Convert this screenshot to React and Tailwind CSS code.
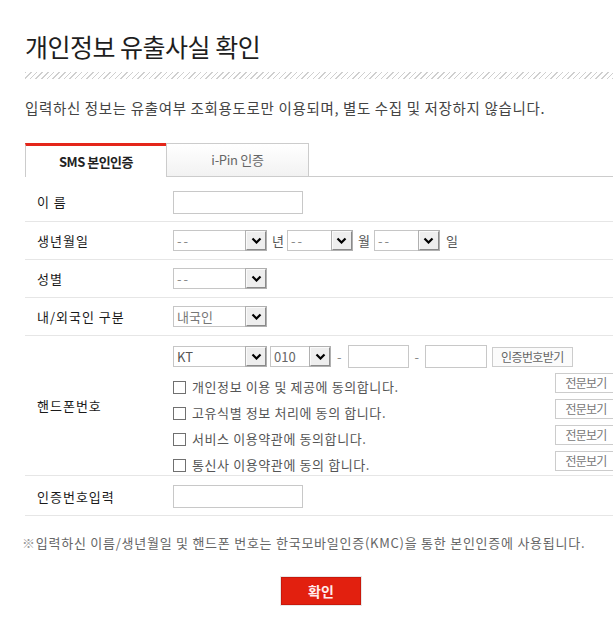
import React from 'react';

const Chevron = () => (
    <svg width="11" height="7" viewBox="0 0 11 7" fill="none">
        <path d="M1.5 1.5 L5.5 5.5 L9.5 1.5" stroke="#000" strokeWidth="2.2" />
    </svg>
);

// windows-style combo box
const Select = ({ className, text, textClass = 'text-[#888] tracking-[2px]' }) => (
    <div className={`flex h-[21px] items-stretch border border-[#c6c6c6] bg-white ${className}`}>
        <span className={`flex-1 overflow-hidden whitespace-nowrap pl-[3px] text-[13px] leading-[19px] ${textClass}`}>
            {text}
        </span>
        <span className="flex w-[20px] items-center justify-center border border-t-[#fafafa] border-l-[#fafafa] border-r-[#8a8a8a] border-b-[#8a8a8a] bg-[#eeeeee] outline outline-1 outline-[#b0b0b0]">
            <Chevron />
        </span>
    </div>
);

const Input = ({ className }) => (
    <div className={`h-[23px] border border-[#c8c8c8] bg-white ${className}`} />
);

const agreements = [
    '개인정보 이용 및 제공에 동의합니다.',
    '고유식별 정보 처리에 동의 합니다.',
    '서비스 이용약관에 동의합니다.',
    '통신사 이용약관에 동의 합니다.',
];

const Label = ({ children }) => (
    <div className="w-[148px] shrink-0 pl-[12px] text-[13px] leading-[18px] tracking-[1px] text-[#1a1a1a]">
        {children}
    </div>
);

const App = () => {
    return (
        <div className="h-[631px] w-[613px] overflow-hidden bg-white pl-[25px] font-['Noto_Sans_CJK_KR','Noto_Sans',sans-serif]">
            <div className="w-[592px]">
                {/* Title */}
                <h1 className="pt-[30px] text-[25px] leading-[32px] tracking-[-0.5px] text-[#1e1e1e]">
                    개인정보 유출사실 확인
                </h1>
                <div className="mt-[10px] h-[7px] bg-[repeating-linear-gradient(135deg,#cfcfcf_0px,#cfcfcf_1px,#ffffff_1px,#ffffff_4px)]" />
                <p className="mt-[19px] text-[14.5px] leading-[20px] tracking-[0.65px] text-[#444]">
                    입력하신 정보는 유출여부 조회용도로만 이용되며, 별도 수집 및 저장하지 않습니다.
                </p>

                {/* Tabs */}
                <div className="mt-[25px] flex h-[34px]">
                    <div className="flex w-[141px] items-center justify-center border-l border-t-[3px] border-l-[#cccccc] border-t-[#e4261a] bg-white text-[13px] font-bold tracking-[-0.5px] text-[#222]">
                        SMS 본인인증
                    </div>
                    <div className="flex w-[143px] items-center justify-center border border-[#cccccc] bg-gradient-to-b from-[#ffffff] to-[#f2f2f2] text-[13px] tracking-[-0.3px] text-[#666]">
                        i-Pin 인증
                    </div>
                    <div className="flex-1 border-b border-[#cccccc]" />
                </div>

                {/* Form */}
                <div className="text-[13px]">
                    <div className="flex h-[45px] items-center border-b border-[#e6e6e6] pt-[6px]">
                        <Label>이 름</Label>
                        <Input className="w-[130px]" />
                    </div>

                    <div className="flex h-[38px] items-center border-b border-[#e6e6e6]">
                        <Label>생년월일</Label>
                        <div className="flex items-center text-[#555]">
                            <Select className="w-[94px]" text="--" />
                            <span className="ml-[5px] mr-[3px]">년</span>
                            <Select className="w-[66px]" text="--" />
                            <span className="ml-[5px] mr-[4px]">월</span>
                            <Select className="w-[66px]" text="--" />
                            <span className="ml-[6px]">일</span>
                        </div>
                    </div>

                    <div className="flex h-[38px] items-center border-b border-[#e6e6e6]">
                        <Label>성별</Label>
                        <Select className="w-[94px]" text="--" />
                    </div>

                    <div className="flex h-[38px] items-center border-b border-[#e6e6e6]">
                        <Label>내/외국인 구분</Label>
                        <Select className="w-[94px]" text="내국인" textClass="text-[#777]" />
                    </div>

                    <div className="flex h-[140px] items-center border-b border-[#e6e6e6]">
                        <Label>핸드폰번호</Label>
                        <div className="flex h-full flex-1 flex-col pt-[9px]">
                            <div className="flex h-[23px] items-center text-[#888]">
                                <Select className="w-[94px]" text="KT" textClass="text-[#555]" />
                                <Select className="ml-[3px] w-[61px]" text="010" textClass="text-[#666] text-[12px]" />
                                <span className="mx-[6px]">-</span>
                                <Input className="w-[61px]" />
                                <span className="mx-[6px]">-</span>
                                <Input className="w-[62px]" />
                                <button className="ml-[5px] h-[20px] border border-[#cccccc] bg-[#fbfbfb] px-[8px] text-[12px] leading-[18px] tracking-[-0.6px] text-[#666]">
                                    인증번호받기
                                </button>
                            </div>
                            <div className="mt-[2px]">
                                {agreements.map((text) => (
                                    <div key={text} className="flex h-[26px] items-center justify-between">
                                        <label className="mt-[8px] flex items-center gap-[6px] text-[13px] leading-[16px] tracking-[0.6px] text-[#555]">
                                            <span className="h-[13px] w-[13px] border border-[#707070] bg-white" />
                                            {text}
                                        </label>
                                        <button className="h-[20px] w-[62px] border border-[#cccccc] bg-white text-[12px] leading-[18px] tracking-[-0.8px] text-[#777]">
                                            전문보기
                                        </button>
                                    </div>
                                ))}
                            </div>
                        </div>
                    </div>

                    <div className="flex h-[40px] items-center border-b border-[#e6e6e6] pt-[2px]">
                        <Label>인증번호입력</Label>
                        <Input className="w-[130px]" />
                    </div>
                </div>

                {/* Notice */}
                <p className="mt-[18px] -ml-[3px] text-[13px] leading-[18px] tracking-[0.75px] text-[#666]">
                    <span className="text-[#999]">※</span>입력하신 이름/생년월일 및 핸드폰 번호는 한국모바일인증(KMC)을 통한 본인인증에 사용됩니다.
                </p>

                <div className="mt-[25px] flex justify-center">
                    <button className="h-[28px] w-[80px] border border-[#c9180b] bg-[#e2200f] text-[14px] font-bold text-[#ffecec] shadow-[0_0_0_1px_#e8e8e8]">
                        확인
                    </button>
                </div>
            </div>
        </div>
    );
};

export default App;
